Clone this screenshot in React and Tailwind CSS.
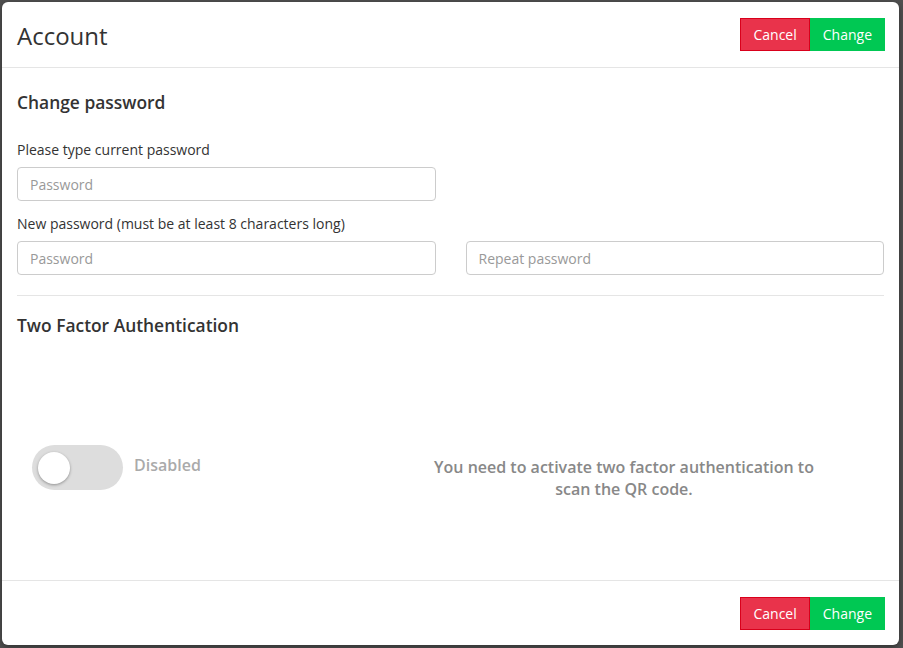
import React from "react";

const Buttons = () => (
  <div className="flex">
    <button className="h-[33px] px-3 bg-[#e9334b] border border-[#d9001b] text-white text-[14px]">
      Cancel
    </button>
    <button className="h-[33px] px-3 bg-[#00c853] border border-[#00c853] text-white text-[14px]">
      Change
    </button>
  </div>
);

const App = () => {
  return (
    <div
      className="w-[903px] h-[648px] bg-[#505050] pt-[2px] pl-[2px] overflow-hidden"
      style={{ fontFamily: '"Open Sans", sans-serif' }}
    >
      <div className="w-[897px] h-[643px] bg-white rounded-[6px] flex flex-col text-[#333] shadow-[0_2px_6px_rgba(0,0,0,0.4)]">
        {/* Header */}
        <div className="h-[66px] flex items-center justify-between pl-[15px] pr-[14px] border-b border-[#e5e5e5]">
          <h1 className="text-[24px] leading-none pt-[2px]">Account</h1>
          <div className="pb-[1px]">
            <Buttons />
          </div>
        </div>

        {/* Body */}
        <div className="flex-1 px-[15px] pt-[21px]">
          <h2 className="text-[17.4px] font-semibold leading-[26px]">Change password</h2>

          <label className="block mt-[25px] text-[14px] leading-[20px]">Please type current password</label>
          <div className="mt-[7px] w-[419px]">
            <input
              type="password"
              placeholder="Password"
              className="w-full h-[34px] px-3 text-[14px] border border-[#ccc] rounded-[4px] placeholder:text-[#999] outline-none"
            />
          </div>

          <label className="block mt-[13px] text-[14px] leading-[20px]">New password (must be at least 8 characters long)</label>
          <div className="mt-[7px] grid grid-cols-2 gap-[30px]">
            <input
              type="password"
              placeholder="Password"
              className="w-full h-[34px] px-3 text-[14px] border border-[#ccc] rounded-[4px] placeholder:text-[#999] outline-none"
            />
            <input
              type="password"
              placeholder="Repeat password"
              className="w-full h-[34px] px-3 text-[14px] border border-[#ccc] rounded-[4px] placeholder:text-[#999] outline-none"
            />
          </div>

          <div className="mt-[20px] border-t border-[#e5e5e5]" />

          <h2 className="mt-[16px] text-[17.4px] font-semibold leading-[26px]">Two Factor Authentication</h2>

          <div className="mt-[107px] flex items-start">
            <div className="flex items-center pl-[15px] w-[400px]">
              <div className="w-[91px] h-[45px] rounded-full bg-[#dddddd] flex items-center pl-[6px]">
                <div className="w-[32px] h-[32px] rounded-full bg-white shadow-[0_1px_3px_rgba(0,0,0,0.35)]" />
              </div>
              <span className="ml-[11px] mb-[5px] text-[16px] font-semibold text-[#aaa]">Disabled</span>
            </div>
            <div className="ml-[1px] w-[412px] pt-[11px] text-center text-[16px] font-semibold leading-[22px] text-[#888]">
              You need to activate two factor authentication to scan the QR code.
            </div>
          </div>
        </div>

        {/* Footer */}
        <div className="h-[65px] flex items-center justify-end px-[14px] border-t border-[#e5e5e5]">
          <Buttons />
        </div>
      </div>
    </div>
  );
};

export default App;
